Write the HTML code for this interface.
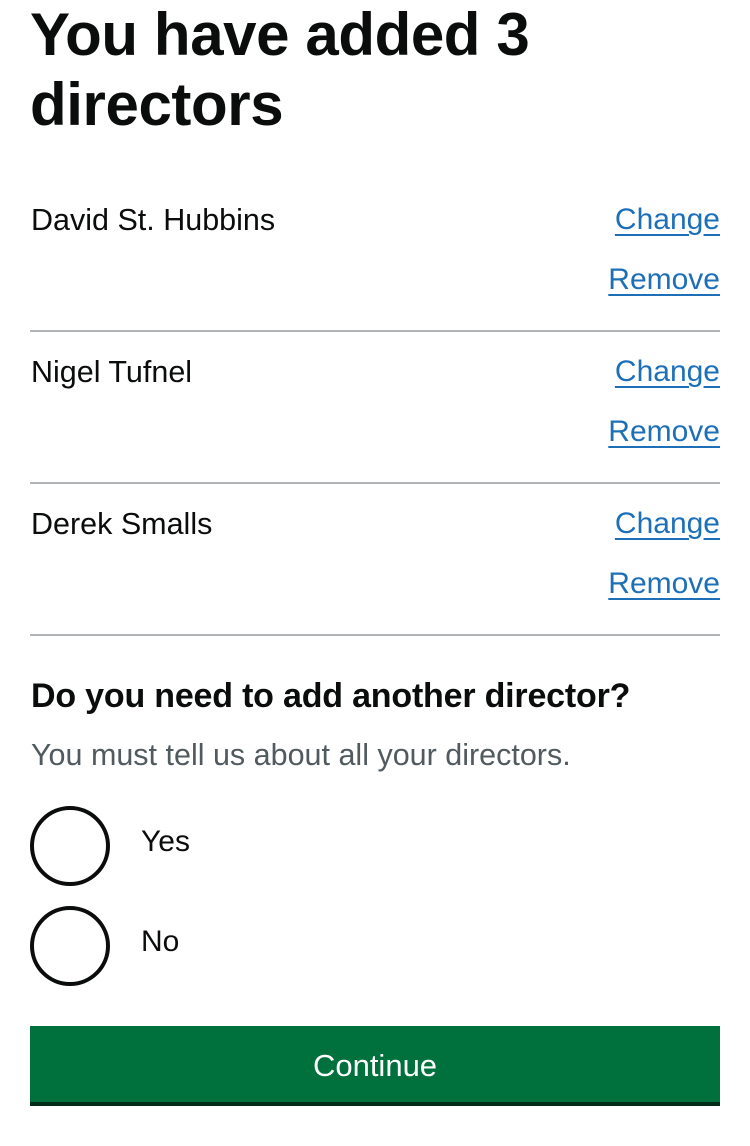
<!DOCTYPE html>
<html><head><meta charset="utf-8"><style>
body{margin:0;background:#fff;font-family:"Liberation Sans",Arial,sans-serif;color:#0b0c0c;width:750px;height:1146px;overflow:hidden;position:relative}
.a{position:absolute;white-space:nowrap}
h1{position:absolute;left:30px;top:0px;margin:0;font-size:60px;line-height:70px;font-weight:bold;letter-spacing:-0.4px}
.name{font-size:30.5px;left:31px}
.lnk{font-size:30px;color:#1d70b8;text-decoration:underline;text-underline-offset:5px;text-decoration-thickness:2px;right:30px}
.hr{position:absolute;left:30px;width:690px;height:2px;background:#b1b4b6}
.r{position:absolute;left:30px;width:72px;height:72px;border:4px solid #0b0c0c;border-radius:50%}
.lab{font-size:30px;left:141px}
</style></head><body>
<h1>You have added 3<br>directors</h1>
<div class="a name" style="top:203px">David St. Hubbins</div>
<div class="a lnk" style="top:203px">Change</div>
<div class="a lnk" style="top:263px">Remove</div>
<div class="hr" style="top:330px"></div>
<div class="a name" style="top:355px">Nigel Tufnel</div>
<div class="a lnk" style="top:355px">Change</div>
<div class="a lnk" style="top:415px">Remove</div>
<div class="hr" style="top:482px"></div>
<div class="a name" style="top:507px">Derek Smalls</div>
<div class="a lnk" style="top:507px">Change</div>
<div class="a lnk" style="top:567px">Remove</div>
<div class="hr" style="top:634px"></div>
<div class="a" style="left:31px;top:677px;font-size:34px;font-weight:bold;letter-spacing:-0.2px">Do you need to add another director?</div>
<div class="a" style="left:31px;top:738px;font-size:30.5px;color:#505a5f">You must tell us about all your directors.</div>
<div class="r" style="top:806px"></div>
<div class="a lab" style="top:825px">Yes</div>
<div class="r" style="top:906px"></div>
<div class="a lab" style="top:925px">No</div>
<div style="position:absolute;left:30px;top:1026px;width:690px;height:76px;background:#00703c;border-bottom:4px solid #002d18;color:#fff;font-size:31px;text-align:center;line-height:80px">Continue</div>
</body></html>
